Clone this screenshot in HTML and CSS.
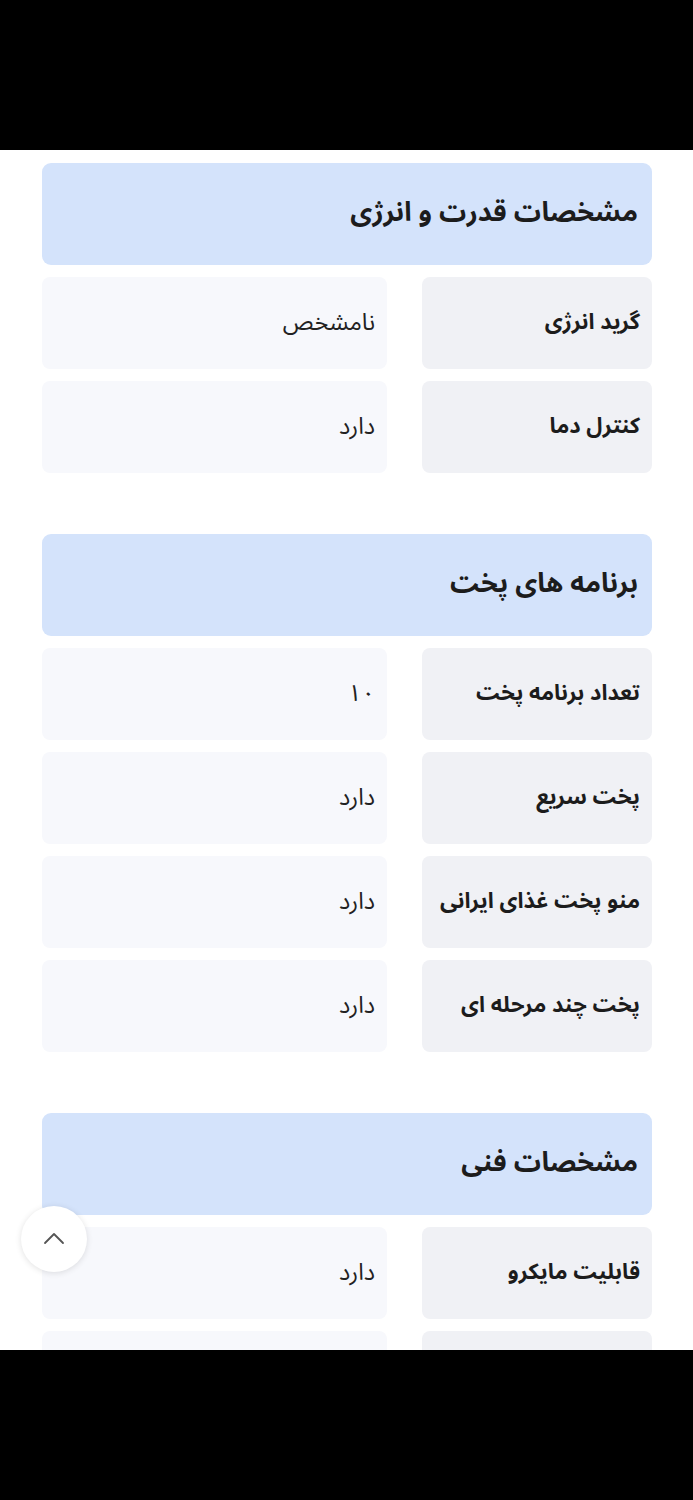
FILE: index.html
```html
<!DOCTYPE html>
<html lang="fa" dir="rtl">
<head>
<meta charset="utf-8">
<title>مشخصات</title>
<link rel="stylesheet" href="styles.css">
</head>
<body>
<div class="bar-top"></div>
<main class="screen">
  <section class="group">
    <h2 class="group-title">مشخصات قدرت و انرژی</h2>
    <div class="spec-row"><div class="spec-label">گرید انرژی</div><div class="spec-value">نامشخص</div></div>
    <div class="spec-row"><div class="spec-label">کنترل دما</div><div class="spec-value">دارد</div></div>
  </section>
  <section class="group">
    <h2 class="group-title">برنامه های پخت</h2>
    <div class="spec-row"><div class="spec-label">تعداد برنامه پخت</div><div class="spec-value">۱۰</div></div>
    <div class="spec-row"><div class="spec-label">پخت سریع</div><div class="spec-value">دارد</div></div>
    <div class="spec-row"><div class="spec-label">منو پخت غذای ایرانی</div><div class="spec-value">دارد</div></div>
    <div class="spec-row"><div class="spec-label">پخت چند مرحله ای</div><div class="spec-value">دارد</div></div>
  </section>
  <section class="group">
    <h2 class="group-title">مشخصات فنی</h2>
    <div class="spec-row"><div class="spec-label">قابلیت مایکرو</div><div class="spec-value">دارد</div></div>
    <div class="spec-row"><div class="spec-label">&nbsp;</div><div class="spec-value">&nbsp;</div></div>
  </section>
  <button class="to-top" aria-label="بالا">
    <svg width="24" height="24" viewBox="0 0 24 24" fill="none" stroke="#555" stroke-width="1.8" stroke-linecap="round" stroke-linejoin="round"><path d="M3 16 L12 7 L21 16"/></svg>
  </button>
</main>
<div class="bar-bottom"></div>
</body>
</html>
```

FILE: styles.css
```css
* { box-sizing: border-box; }
html, body { margin: 0; padding: 0; background: #000; }
body {
  font-family: "Noto Sans Arabic", "DejaVu Sans", "Noto Sans", sans-serif;
  color: #1a1a1a;
  width: 693px;
  height: 1500px;
  overflow: hidden;
}
.bar-top { height: 150px; background: #000; }
.bar-bottom { height: 150px; background: #000; }
.screen {
  position: relative;
  height: 1200px;
  overflow: hidden;
  background: #fff;
  padding: 13px 41px 0 42px;
  display: flex;
  flex-direction: column;
  gap: 61px;
}
.group { display: flex; flex-direction: column; gap: 12px; }
.group-title {
  margin: 0;
  height: 102px;
  background: #d4e3fb;
  border-radius: 9px;
  display: flex;
  align-items: center;
  padding: 0 14px 4px;
  font-size: 27px;
  font-weight: bold;
  color: #1c1c1c;
}
.spec-row {
  display: grid;
  grid-template-columns: 230px 1fr;
  column-gap: 35px;
  height: 92px;
}
.spec-label, .spec-value {
  border-radius: 8px;
  display: flex;
  align-items: center;
  padding: 0 12px 2px;
}
.spec-label { background: #f0f1f5; font-weight: 700; color: #1c1c1c; font-size: 22px; }
.spec-value { background: #f7f8fc; color: #222; font-size: 23.5px; }
.to-top {
  position: absolute;
  left: 21px;
  top: 1056px;
  width: 66px;
  height: 66px;
  border-radius: 50%;
  border: none;
  background: #fff;
  box-shadow: 0 1px 6px rgba(0,0,0,0.12);
  display: flex;
  align-items: center;
  justify-content: center;
  padding: 0;
}
```
